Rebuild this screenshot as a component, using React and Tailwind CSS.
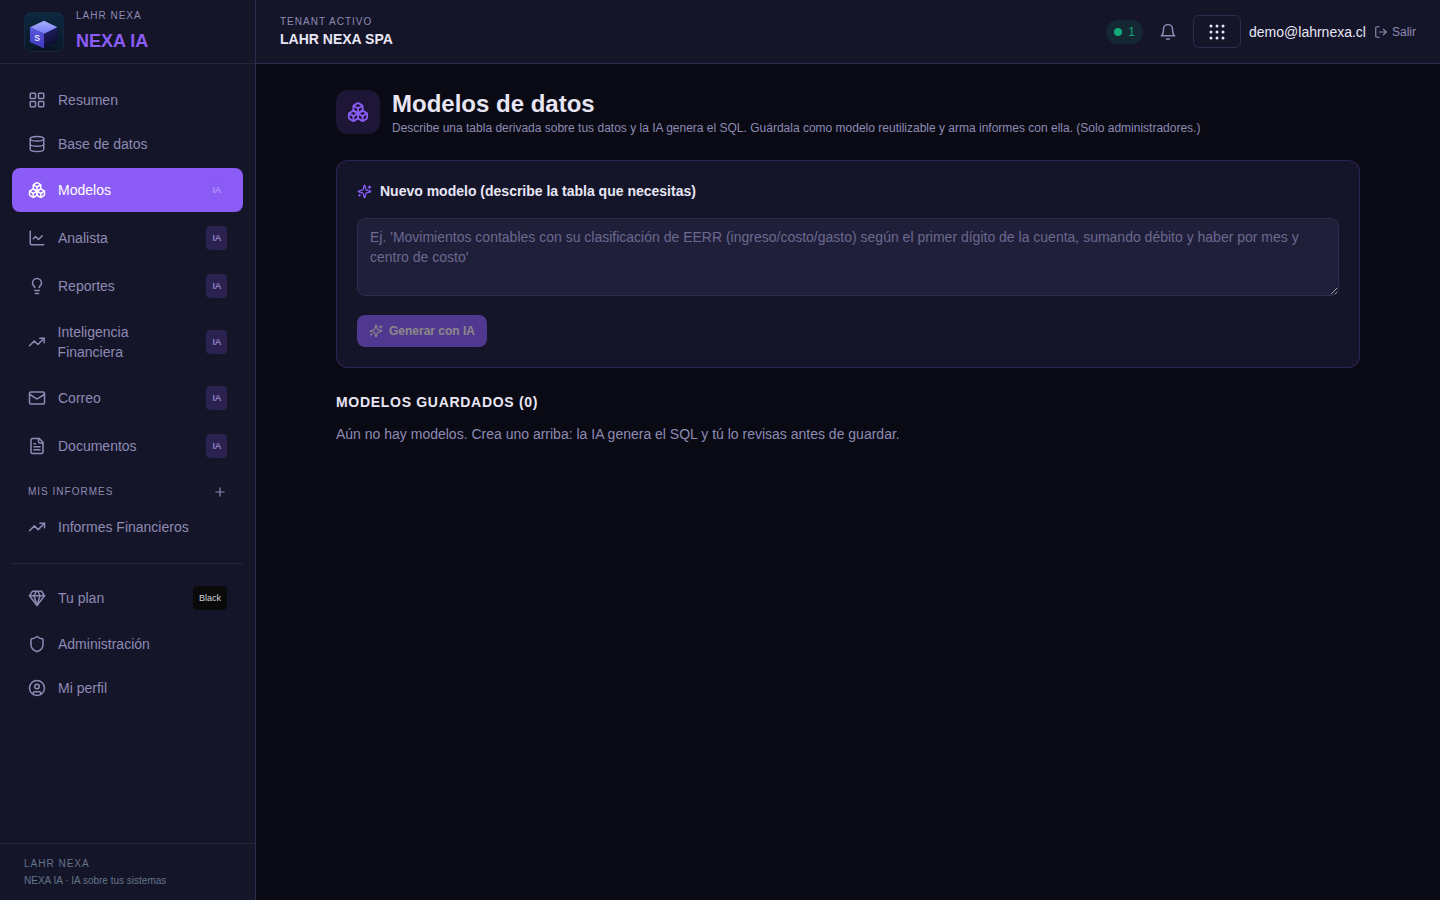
import {
  LayoutGrid,
  Database,
  Boxes,
  ChartLine,
  Lightbulb,
  TrendingUp,
  Plus,
  Shield,
  CircleUser,
  LogOut,
} from "lucide-react";

function StrokeIcon({ size = 18, className = "", children }) {
  return (
    <svg
      width={size}
      height={size}
      viewBox="0 0 24 24"
      fill="none"
      stroke="currentColor"
      strokeWidth="2"
      strokeLinecap="round"
      strokeLinejoin="round"
      className={className}
    >
      {children}
    </svg>
  );
}

function Sparkles(props) {
  return (
    <StrokeIcon {...props}>
      <path d="M9.937 15.5A2 2 0 0 0 8.5 14.063l-6.135-1.582a.5.5 0 0 1 0-.962L8.5 9.936A2 2 0 0 0 9.937 8.5l1.582-6.135a.5.5 0 0 1 .963 0L14.063 8.5A2 2 0 0 0 15.5 9.937l6.135 1.581a.5.5 0 0 1 0 .964L15.5 14.063a2 2 0 0 0-1.437 1.437l-1.582 6.135a.5.5 0 0 1-.963 0z" />
      <path d="M20 3v4" />
      <path d="M22 5h-4" />
      <path d="M4 17v2" />
      <path d="M5 18H3" />
    </StrokeIcon>
  );
}

function Gem(props) {
  return (
    <StrokeIcon {...props}>
      <path d="M6 3h12l4 6-10 13L2 9Z" />
      <path d="M11 3 8 9l4 13 4-13-3-6" />
      <path d="M2 9h20" />
    </StrokeIcon>
  );
}

function Mail(props) {
  return (
    <StrokeIcon {...props}>
      <rect width="20" height="16" x="2" y="4" rx="2" />
      <path d="m22 7-8.97 5.7a1.94 1.94 0 0 1-2.06 0L2 7" />
    </StrokeIcon>
  );
}

function FileText(props) {
  return (
    <StrokeIcon {...props}>
      <path d="M15 2H6a2 2 0 0 0-2 2v16a2 2 0 0 0 2 2h12a2 2 0 0 0 2-2V7Z" />
      <path d="M14 2v4a2 2 0 0 0 2 2h4" />
      <path d="M10 9H8" />
      <path d="M16 13H8" />
      <path d="M16 17H8" />
    </StrokeIcon>
  );
}

function Bell(props) {
  return (
    <StrokeIcon {...props}>
      <path d="M6 8a6 6 0 0 1 12 0c0 7 3 9 3 9H3s3-2 3-9" />
      <path d="M10.3 21a1.94 1.94 0 0 0 3.4 0" />
    </StrokeIcon>
  );
}

const MAIN_ITEMS = [
  { label: "Resumen", icon: LayoutGrid },
  { label: "Base de datos", icon: Database },
  { label: "Modelos", icon: Boxes, badge: "IA", active: true },
  { label: "Analista", icon: ChartLine, badge: "IA" },
  { label: "Reportes", icon: Lightbulb, badge: "IA" },
  { label: "Inteligencia Financiera", icon: TrendingUp, badge: "IA" },
  { label: "Correo", icon: Mail, badge: "IA" },
  { label: "Documentos", icon: FileText, badge: "IA" },
];

const ACCOUNT_ITEMS = [
  { label: "Tu plan", icon: Gem, badge: "Black", dark: true },
  { label: "Administración", icon: Shield },
  { label: "Mi perfil", icon: CircleUser },
];

function Logo() {
  return (
    <svg width="40" height="40" viewBox="0 0 40 40" className="shrink-0">
      <defs>
        <linearGradient id="logoBg" x1="0" y1="0" x2="0" y2="1">
          <stop offset="0" stopColor="#0d2840" />
          <stop offset="1" stopColor="#0a1828" />
        </linearGradient>
        <linearGradient id="cubeTop" x1="0" y1="0" x2="0" y2="1">
          <stop offset="0" stopColor="#a9b2fb" />
          <stop offset="1" stopColor="#7377f3" />
        </linearGradient>
        <linearGradient id="cubeLeft" x1="0" y1="0" x2="0" y2="1">
          <stop offset="0" stopColor="#5b57e2" />
          <stop offset="1" stopColor="#4139bd" />
        </linearGradient>
        <linearGradient id="cubeRight" x1="0.2" y1="0" x2="0.6" y2="1">
          <stop offset="0" stopColor="#262070" />
          <stop offset="1" stopColor="#080a24" />
        </linearGradient>
      </defs>
      <rect x="0.5" y="0.5" width="39" height="39" rx="7" fill="url(#logoBg)" stroke="#16283f" />
      <ellipse cx="20" cy="36.5" rx="13" ry="2" fill="#07101d" opacity="0.7" />
      <path d="M20 8.7 33.5 15.3 20 22 6 15.3Z" fill="url(#cubeTop)" />
      <path d="M6 15.3 20 22V36.5L6 30Z" fill="url(#cubeLeft)" />
      <path d="M33.5 15.3 20 22V36.5L33.5 30Z" fill="url(#cubeRight)" />
      <text x="10.3" y="29" fontSize="8.6" fontWeight="700" fill="#e2e4ff">
        S
      </text>
    </svg>
  );
}

function NavItem({ item }) {
  const Icon = item.icon;
  let badgeClass = "bg-[#8b5cf6]/20 text-[#b8a8e8]";
  if (item.active) badgeClass = "bg-[#8b5cf6]/20 text-[#c4a9fb]";
  if (item.dark) badgeClass = "bg-[#0a0a0a] text-[#d4d4d8]";

  return (
    <a
      className={`flex items-center gap-3 rounded-lg px-4 py-2.5 text-sm ${
        item.active ? "bg-[#8b5cf6] text-white" : "text-[#8e8ab4]"
      }`}
    >
      <Icon size={18} />
      <span>{item.label}</span>
      {item.badge && (
        <span
          className={`ml-auto flex h-6 shrink-0 items-center rounded px-1.5 text-[9px] ${badgeClass}`}
        >
          {item.badge}
        </span>
      )}
    </a>
  );
}

function Sidebar() {
  return (
    <aside className="flex w-64 shrink-0 flex-col border-r border-[#2d2b4e] bg-[#151529]">
      <div className="flex h-16 shrink-0 items-center gap-3 border-b border-[#1e293b] px-6">
        <Logo />
        <div>
          <p className="text-[10px] leading-[15px] tracking-[1px] text-[#8e8ab4]">LAHR NEXA</p>
          <p className="mt-1 text-lg font-bold leading-7 text-[#8b5cf6]">NEXA IA</p>
        </div>
      </div>

      <nav className="flex flex-1 flex-col gap-1 px-3 py-4">
        {MAIN_ITEMS.map((item) => (
          <NavItem key={item.label} item={item} />
        ))}

        <div className="-mb-1 flex h-[31px] items-center justify-between px-4 pt-3 pb-1">
          <span className="text-[10px] leading-[15px] tracking-[1px] text-[#8e8ab4]">
            MIS INFORMES
          </span>
          <Plus size={14} className="text-[#8e8ab4]" />
        </div>
        <div className="mt-1">
          <NavItem item={{ label: "Informes Financieros", icon: TrendingUp }} />
        </div>

        <div className="mt-3 flex flex-col gap-1 border-t border-[#1e293b] pt-3">
          {ACCOUNT_ITEMS.map((item) => (
            <NavItem key={item.label} item={item} />
          ))}
        </div>
      </nav>

      <div className="border-t border-[#1e293b] px-6 py-3 text-[10px] leading-[15px] text-[#64748b]">
        <p className="tracking-[1px]">LAHR NEXA</p>
        <p className="mt-0.5">NEXA IA · IA sobre tus sistemas</p>
      </div>
    </aside>
  );
}

function AppsIcon() {
  const steps = [2, 8, 14];
  return (
    <svg width="16" height="16" viewBox="0 0 16 16" fill="currentColor">
      {steps.map((y) => steps.map((x) => <circle key={`${x}-${y}`} cx={x} cy={y} r="1.5" />))}
    </svg>
  );
}

function Header() {
  return (
    <header className="flex h-16 shrink-0 items-center justify-between border-b border-[#2d2b4e] bg-[#151529] px-6">
      <div>
        <p className="text-[10px] leading-[15px] tracking-[1px] text-[#8e8ab4]">TENANT ACTIVO</p>
        <p className="text-sm font-bold text-[#e8e6f5]">LAHR NEXA SPA</p>
      </div>

      <div className="flex items-center">
        <div className="flex h-6 items-center gap-1.5 rounded-full bg-[#10b981]/12 px-2 text-xs text-[#13a575]">
          <span className="h-2 w-2 rounded-full bg-[#12a976]" />1
        </div>
        <Bell size={18} className="ml-4 text-[#8e8ab4]" />
        <button className="ml-4 flex h-[33px] w-12 items-center justify-center rounded-md border border-[#2d2b4e] text-[#e8e6f5]">
          <AppsIcon />
        </button>
        <span className="ml-2 text-sm text-[#e8e6f5]">demo@lahrnexa.cl</span>
        <button className="ml-2 flex items-center gap-1 text-xs text-[#8e8ab4]">
          <LogOut size={14} />
          Salir
        </button>
      </div>
    </header>
  );
}

function App() {
  return (
    <div className="flex h-screen overflow-hidden bg-[#0a0a14] font-['Liberation_Sans',Arial,sans-serif]">
      <Sidebar />
      <div className="flex min-w-0 flex-1 flex-col">
        <Header />
        <main className="mx-auto w-full max-w-[1024px] flex-1 py-6">
          <div className="flex items-center gap-3">
            <div className="flex h-11 w-11 items-center justify-center rounded-xl bg-[#8b5cf6]/15 text-[#8b5cf6]">
              <Boxes size={22} />
            </div>
            <div>
              <h1 className="text-2xl font-bold text-[#e8e6f5]">Modelos de datos</h1>
              <p className="text-xs text-[#8e8ab4]">
                Describe una tabla derivada sobre tus datos y la IA genera el SQL. Guárdala como
                modelo reutilizable y arma informes con ella. (Solo administradores.)
              </p>
            </div>
          </div>

          <section className="mt-6 rounded-xl border border-[#8b5cf6]/22 bg-[#151529] p-5">
            <div className="flex items-center gap-2">
              <Sparkles size={15} className="text-[#8b5cf6]" />
              <h2 className="text-sm font-bold text-[#e8e6f5]">
                Nuevo modelo (describe la tabla que necesitas)
              </h2>
            </div>
            <textarea
              rows={3}
              placeholder="Ej. 'Movimientos contables con su clasificación de EERR (ingreso/costo/gasto) según el primer dígito de la cuenta, sumando débito y haber por mes y centro de costo'"
              className="mt-[17px] block w-full resize-y rounded-lg border border-[#2d2b4e] bg-[#201f3a] px-3 py-2 text-sm text-[#e8e6f5] placeholder:text-[#6c688f]"
            />
            <button
              disabled
              className="mt-[19px] flex h-8 items-center gap-1.5 rounded-lg bg-[#8b5cf6] px-3 text-xs font-bold text-[#fff8e8] opacity-50"
            >
              <Sparkles size={14} />
              Generar con IA
            </button>
          </section>

          <h2 className="mt-6 text-sm font-bold tracking-[0.7px] text-[#e8e6f5]">
            MODELOS GUARDADOS (0)
          </h2>
          <p className="mt-3 text-sm text-[#8e8ab4]">
            Aún no hay modelos. Crea uno arriba: la IA genera el SQL y tú lo revisas antes de
            guardar.
          </p>
        </main>
      </div>
    </div>
  );
}

export default App;
